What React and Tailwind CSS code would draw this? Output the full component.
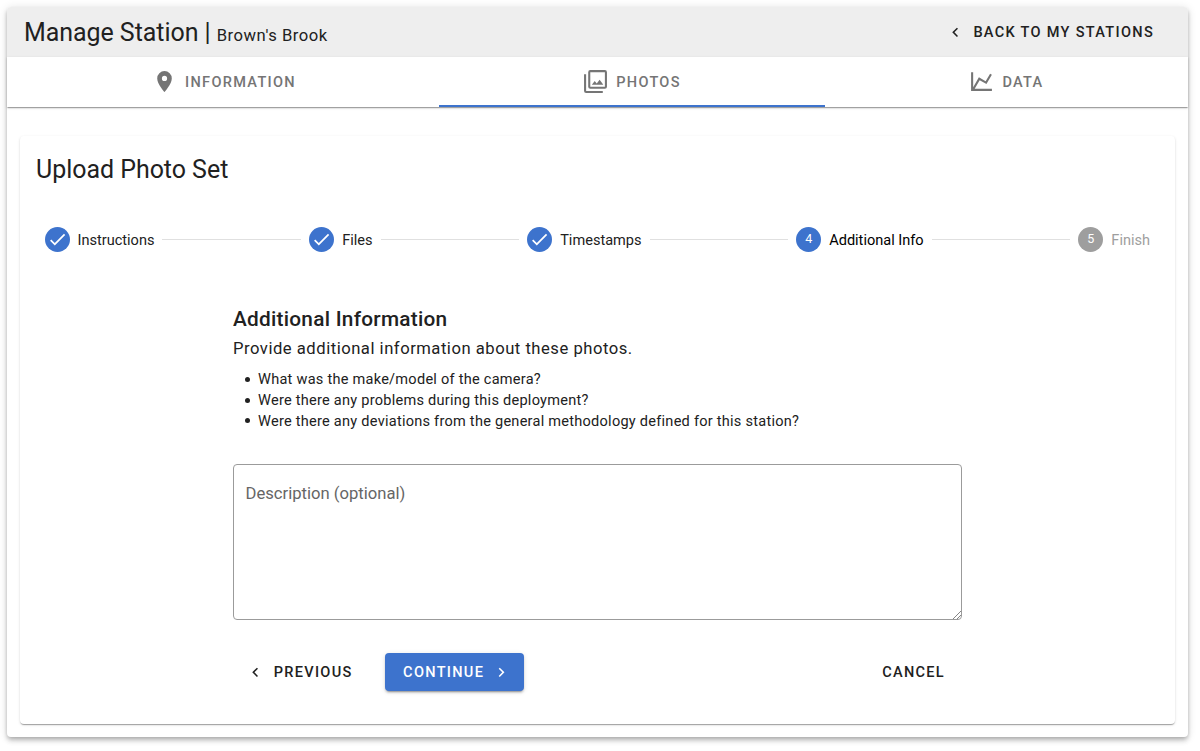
import React from "react";

const PATHS = {
  marker:
    "M12,11.5A2.5,2.5 0 0,1 9.5,9A2.5,2.5 0 0,1 12,6.5A2.5,2.5 0 0,1 14.5,9A2.5,2.5 0 0,1 12,11.5M12,2A7,7 0 0,0 5,9C5,14.25 12,22 12,22C12,22 19,14.25 19,9A7,7 0 0,0 12,2Z",
  images:
    "M21,17H7V3H21M21,1H7A2,2 0 0,0 5,3V17A2,2 0 0,0 7,19H21A2,2 0 0,0 23,17V3A2,2 0 0,0 21,1M3,5H1V21A2,2 0 0,0 3,23H19V21H3M15.96,10.29L13.21,13.83L11.25,11.47L8.5,15H19.5L15.96,10.29Z",
  chart:
    "M16,11.78L20.24,4.45L21.97,5.45L16.74,14.5L10.23,10.75L5.46,19H22V21H2V3H4V17.54L9.5,8L16,11.78Z",
  left: "M15.41,16.58L10.83,12L15.41,7.41L14,6L8,12L14,18L15.41,16.58Z",
  right: "M8.59,16.58L13.17,12L8.59,7.41L10,6L16,12L10,18L8.59,16.58Z",
  check: "M21,7L9,19L3.5,13.5L4.91,12.09L9,16.17L19.59,5.59L21,7Z",
};

function Icon({ name, className }) {
  return (
    <svg viewBox="0 0 24 24" fill="currentColor" className={`shrink-0 ${className}`}>
      <path d={PATHS[name]} />
    </svg>
  );
}

function Tab({ icon, label, width, active }) {
  return (
    <div
      className={`flex h-full items-center justify-center gap-2 border-y-2 border-t-transparent ${width} ${
        active ? "border-b-[#3d73cd]" : "border-b-transparent"
      }`}
    >
      <Icon name={icon} className="mb-px size-[25px]" />
      <span className="pt-px">{label}</span>
    </div>
  );
}

function Step({ number, label, state }) {
  return (
    <div className="flex shrink-0 items-center gap-2">
      <span
        className={`mb-px flex size-[25px] items-center justify-center rounded-full text-[12.5px] text-white ${
          state === "todo" ? "bg-[#9e9e9e]" : "bg-[#3d73cd]"
        }`}
      >
        {state === "done" ? <Icon name="check" className="size-[20.8px]" /> : number}
      </span>
      <span
        className={`text-[14.56px] leading-none ${
          state === "todo" ? "text-[#9e9e9e]" : state === "current" ? "text-black" : "text-[#212121]"
        }`}
      >
        {label}
      </span>
    </div>
  );
}

const STEPS = [
  { label: "Instructions", state: "done" },
  { label: "Files", state: "done" },
  { label: "Timestamps", state: "done" },
  { label: "Additional Info", state: "current" },
  { label: "Finish", state: "todo" },
];

const QUESTIONS = [
  "What was the make/model of the camera?",
  "Were there any problems during this deployment?",
  "Were there any deviations from the general methodology defined for this station?",
];

const BUTTON = "flex items-center text-[14.56px] font-medium tracking-[1.3px]";

export default function App() {
  return (
    <div className="h-[751px] overflow-hidden bg-white pt-[7px] pl-[7px] font-[Roboto,sans-serif] text-[#212121]">
      <main className="flex h-[730px] w-[1181px] flex-col rounded bg-white shadow-[0_2px_4px_-1px_rgba(0,0,0,0.2),0_4px_5px_0_rgba(0,0,0,0.14),0_1px_10px_0_rgba(0,0,0,0.12)]">
        <header className="flex h-[50px] shrink-0 items-center justify-between rounded-t bg-[#eeeeee] pr-[34px] pl-[17px]">
          <h1 className="pt-[3px] text-[24.96px] leading-[47px] tracking-[-0.04px]">
            Manage Station | <span className="text-[16.64px] tracking-[0.52px]">Brown's Brook</span>
          </h1>
          <button className={BUTTON}>
            <Icon name="left" className="mr-[9px] size-[18.7px]" />
            <span className="pt-[2px]">BACK TO MY STATIONS</span>
          </button>
        </header>

        <nav className="flex h-[50px] shrink-0 text-[14.56px] font-medium tracking-[1.3px] text-[#757575] shadow-[0_2px_1px_-1px_rgba(0,0,0,0.2),0_1px_1px_0_rgba(0,0,0,0.14),0_1px_3px_0_rgba(0,0,0,0.12)]">
          <Tab icon="marker" label="INFORMATION" width="w-[433px] pl-px -mr-px" />
          <Tab icon="images" label="PHOTOS" width="w-[386px]" active />
          <Tab icon="chart" label="DATA" width="w-[363px]" />
        </nav>

        <section className="mt-[29px] ml-[13px] h-[588px] w-[1155px] rounded bg-white shadow-[0_2px_1px_-1px_rgba(0,0,0,0.2),0_1px_1px_0_rgba(0,0,0,0.14),0_1px_3px_0_rgba(0,0,0,0.12)]">
          <h2 className="px-4 pt-[17px] text-[24.96px] leading-[33px] tracking-[-0.02px]">Upload Photo Set</h2>

          <div className="mt-[41px] flex h-[26px] items-center gap-2 pr-[25px] pl-[24.5px]">
            {STEPS.map((s, i) => (
              <React.Fragment key={s.label}>
                {i > 0 && <span className="mb-px h-px flex-1 bg-[#e0e0e0]" />}
                <Step number={i + 1} label={s.label} state={s.state} />
              </React.Fragment>
            ))}
          </div>

          <div className="ml-[213px] w-[729px] pt-[50px]">
            <h3 className="text-[20.8px] leading-[33px] font-medium tracking-[0.26px]">Additional Information</h3>
            <p className="text-[16.64px] leading-[26px] tracking-[0.51px]">
              Provide additional information about these photos.
            </p>
            <ul className="mt-[7px] text-[14.56px] leading-[20.8px] tracking-[0.25px]">
              {QUESTIONS.map((q) => (
                <li key={q} className="flex items-center pl-3">
                  <span className="mr-[8px] size-[5px] rounded-full bg-[#212121]" />
                  {q}
                </li>
              ))}
            </ul>
            <div className="relative mt-[33px] h-[156px] rounded border border-[#9b9b9b] pt-[18px] pl-[11.5px] text-[16.64px] leading-[21px] text-[#666666]">
              Description (optional)
              <svg viewBox="0 0 9 9" className="absolute right-0 bottom-0 size-[9px]" stroke="#666666" strokeWidth="0.8">
                <path d="M1 9L9 1M5 9L9 5" />
              </svg>
            </div>
            <div className="mt-[33px] flex h-[38px] items-center justify-between pr-[17px]">
              <div className="flex items-center">
                <button className={`${BUTTON} ml-[12.5px]`}>
                  <Icon name="left" className="mr-[9.5px] size-[18.7px]" />
                  <span className="pt-px">PREVIOUS</span>
                </button>
                <button
                  className={`${BUTTON} ml-[32.5px] h-[38px] w-[138.5px] rounded bg-[#3d73cd] pl-[18px] text-white shadow-[0_3px_1px_-2px_rgba(0,0,0,0.2),0_2px_2px_0_rgba(0,0,0,0.14),0_1px_5px_0_rgba(0,0,0,0.12)]`}
                >
                  <span className="pt-px">CONTINUE</span>
                  <Icon name="right" className="ml-2 size-[18.7px]" />
                </button>
              </div>
              <button className={BUTTON}>
                <span className="pt-px">CANCEL</span>
              </button>
            </div>
          </div>
        </section>
      </main>
    </div>
  );
}
